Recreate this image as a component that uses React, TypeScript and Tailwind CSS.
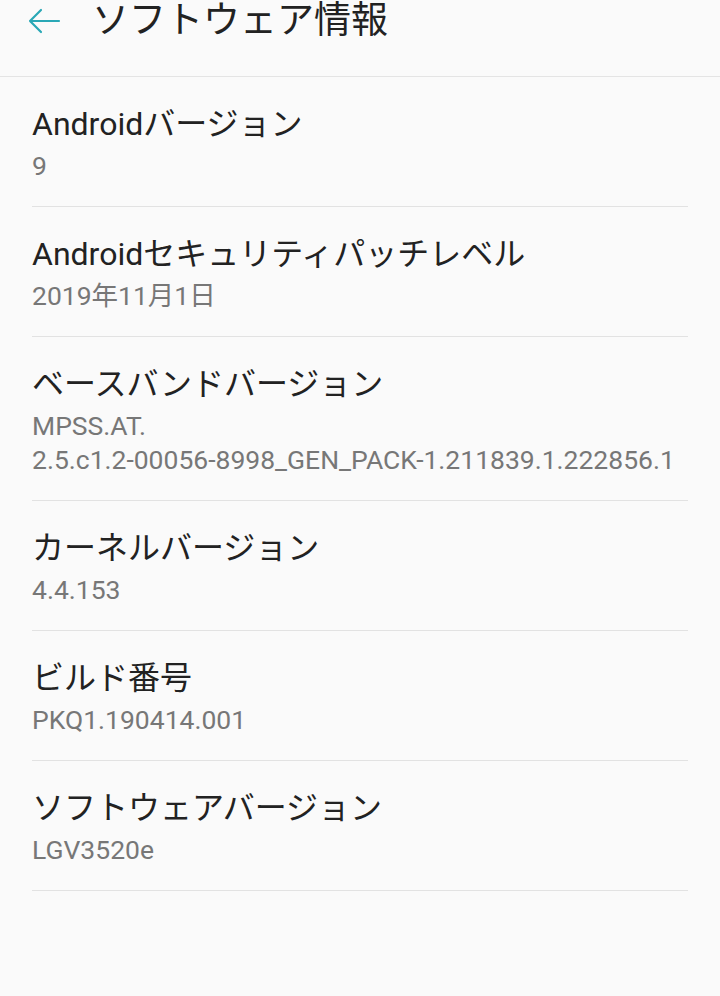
const items = [
  { title: 'Androidバージョン', value: ['9'] },
  { title: 'Androidセキュリティパッチレベル', value: ['2019年11月1日'] },
  {
    title: 'ベースバンドバージョン',
    value: ['MPSS.AT.', '2.5.c1.2-00056-8998_GEN_PACK-1.211839.1.222856.1'],
  },
  { title: 'カーネルバージョン', value: ['4.4.153'] },
  { title: 'ビルド番号', value: ['PKQ1.190414.001'] },
  { title: 'ソフトウェアバージョン', value: ['LGV3520e'] },
];

const font = { fontFamily: 'Roboto, "Noto Sans CJK JP", sans-serif' };

export default function App() {
  return (
    <div className="min-h-[996px] w-[720px] bg-[#fafafa] overflow-hidden" style={font}>
      <div className="h-[77px] border-b border-[#e4e4e4]">
        <div className="flex h-[42px] items-center">
          <svg className="ml-[27px] h-[28px] w-[34px]" viewBox="0 0 34 28" fill="none">
            <path
              d="M3 14 H32 M14 3 L3 14 L14 25"
              stroke="#2aa8b6"
              strokeWidth="2.2"
              strokeLinecap="round"
              strokeLinejoin="round"
            />
          </svg>
          <span className="ml-[31px] text-[37px] leading-[42px] text-[#222222]">ソフトウェア情報</span>
        </div>
      </div>

      <div className="px-[32px]">
        {items.map((item) => (
          <div key={item.title} className="border-b border-[#e2e2e2] pt-[27px] pb-[23px]">
            <div className="text-[32px] leading-[40px] text-[#222222]">{item.title}</div>
            <div className="mt-[5px] text-[26.5px] leading-[34px] text-[#777777]">
              {item.value.map((v) => (
                <div key={v}>{v}</div>
              ))}
            </div>
          </div>
        ))}
      </div>
    </div>
  );
}
